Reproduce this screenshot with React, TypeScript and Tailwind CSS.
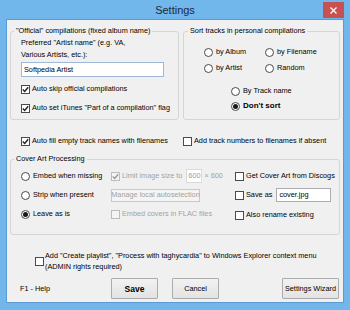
import React from "react";

const font = { fontFamily: '"Liberation Sans", Arial, sans-serif' };

const Check = ({ checked = false, disabled = false }: { checked?: boolean; disabled?: boolean }) => (
    <span className={`w-[9px] h-[9px] shrink-0 border flex items-center justify-center ${disabled ? "border-[#bcbcbc] bg-[#f4f4f4]" : "border-[#4a4a4a] bg-white"}`}>
        {checked && (
            <svg width="7" height="7" viewBox="0 0 7 7">
                <path d="M0.8 3.6 L2.7 5.5 L6.2 1.2" fill="none" stroke={disabled ? "#9a9a9a" : "#222"} strokeWidth="1.4" />
            </svg>
        )}
    </span>
);

const Radio = ({ checked = false }: { checked?: boolean }) => (
    <span className="w-[9px] h-[9px] shrink-0 rounded-full border border-[#4a4a4a] bg-white flex items-center justify-center">
        {checked && <span className="w-[5px] h-[5px] rounded-full bg-[#1a1a1a]" />}
    </span>
);

const CheckRow = ({ label, checked, disabled, className = "" }: { label: string; checked?: boolean; disabled?: boolean; className?: string }) => (
    <div className={`flex items-center gap-[2px] h-[12px] ${className}`}>
        <Check checked={checked} disabled={disabled} />
        <span className={`whitespace-nowrap ${disabled ? "text-[#a2a2a2]" : ""}`}>{label}</span>
    </div>
);

const RadioRow = ({ label, checked, bold, className = "" }: { label: string; checked?: boolean; bold?: boolean; className?: string }) => (
    <div className={`flex items-center gap-[3px] h-[12px] ${className}`}>
        <Radio checked={checked} />
        <span className={`whitespace-nowrap ${bold ? "font-bold text-[8px]" : ""}`}>{label}</span>
    </div>
);

const Button = ({ label, bold, className = "" }: { label: string; bold?: boolean; className?: string }) => (
    <div className={`h-[21px] flex items-center justify-center whitespace-nowrap border border-[#acacac] bg-gradient-to-b from-[#f2f2f2] to-[#e3e3e3] rounded-[1px] ${bold ? "font-bold text-[8.5px]" : ""} ${className}`}>
        {label}
    </div>
);

export default function App() {
    return (
        <div className="w-[350px] h-[310px] bg-[#72b7ec] flex flex-col text-[7.3px] leading-[12px] text-black" style={font}>
            <div className="h-[20px] relative flex items-center justify-center">
                <span className="text-[11px] text-[#1b2a38]">Settings</span>
                <div className="absolute right-[6px] top-[2px] w-[21px] h-[16px] bg-[#c75050] flex items-center justify-center">
                    <svg width="7" height="7" viewBox="0 0 7 7">
                        <path d="M0.5 0.5 L6.5 6.5 M6.5 0.5 L0.5 6.5" stroke="#fff" strokeWidth="1.3" />
                    </svg>
                </div>
            </div>
            <div className="mx-[7px] mb-[8px] flex-1 bg-[#f0f0f0] shadow-[0_0_0_1px_#5c9bd1] flex flex-col">
                <div className="flex gap-[4px] pl-[3px] pt-[6px]">
                    <fieldset className="w-[169px] h-[94px] border border-[#d5d5d5] rounded-[3px] pl-[10px]">
                        <legend className="ml-[-7px] px-[2px] leading-[10px]">"Official" compilations (fixed album name)</legend>
                        <div className="mt-[1px]">
                            Preferred "Artist name" (e.g. VA,
                            <br />
                            Various Artists, etc.):
                        </div>
                        <div className="mt-[1px] w-[143px] h-[15px] border border-[#9fb8d8] bg-white flex items-center px-[2px]">Softpedia Artist</div>
                        <CheckRow className="mt-[6px]" label="Auto skip official compilations" checked />
                        <CheckRow className="mt-[7px]" label={'Auto set iTunes "Part of a compilation" flag'} checked />
                    </fieldset>
                    <fieldset className="w-[157px] h-[94px] border border-[#d5d5d5] rounded-[3px] pl-[20px]">
                        <legend className="ml-[-16px] px-[2px] leading-[10px]">Sort tracks in personal compilations</legend>
                        <div className="grid grid-cols-[61px_auto] gap-y-[4px] mt-[10px]">
                            <RadioRow label="by Album" />
                            <RadioRow label="by Filename" />
                            <RadioRow label="by Artist" />
                            <RadioRow label="Random" />
                        </div>
                        <RadioRow className="mt-[11px] ml-[27px]" label="By Track name" />
                        <RadioRow className="mt-[3px] ml-[27px]" label="Don't sort" checked bold />
                    </fieldset>
                </div>
                <div className="flex mt-[15px] pl-[14px]">
                    <CheckRow className="w-[162px]" label="Auto fill empty track names with filenames" checked />
                    <CheckRow label="Add track numbers to filenames if absent" />
                </div>
                <fieldset className="ml-[3px] mt-[7px] w-[330px] h-[81px] border border-[#d5d5d5] rounded-[3px] pl-[10px]">
                    <legend className="ml-[-7px] px-[2px] leading-[10px]">Cover Art Processing</legend>
                    <div className="grid grid-cols-[90px_124px_auto] grid-rows-[14px_14px_14px] gap-y-[5px] mt-[5px] items-center">
                        <RadioRow label="Embed when missing" />
                        <div className="flex items-center">
                            <CheckRow label="Limit image size to" checked disabled />
                            <div className="ml-[4px] w-[16px] h-[14px] border border-[#dadada] bg-white text-[#9a9a9a] flex items-center justify-center">600</div>
                            <span className="ml-[2px] text-[#a2a2a2]">× 600</span>
                        </div>
                        <CheckRow label="Get Cover Art from Discogs" />
                        <RadioRow label="Strip when present" />
                        <div className="w-[89px] h-[13px] border border-[#c9c9c9] bg-[#f4f4f4] text-[#a2a2a2] flex items-center justify-center whitespace-nowrap">Manage local autoselection</div>
                        <div className="flex items-center">
                            <CheckRow label="Save as" />
                            <div className="ml-[4px] w-[55px] h-[14px] border border-[#abadb3] bg-white flex items-center px-[2px]">cover.jpg</div>
                        </div>
                        <RadioRow label="Leave as is" checked />
                        <CheckRow label="Embed covers in FLAC files" disabled />
                        <CheckRow className="mt-[2px]" label="Also rename existing" />
                    </div>
                </fieldset>
                <div className="flex items-center mt-[15px] pl-[28px] gap-[1px] leading-[11px]">
                    <Check />
                    <div>
                        Add "Create playlist", "Process with taghycardia" to Windows Explorer context menu
                        <br />
                        (ADMIN rights required)
                    </div>
                </div>
                <div className="flex items-center mt-[6px] pl-[13px] pr-[4px]">
                    <span className="w-[91px]">F1 - Help</span>
                    <Button className="w-[47px]" label="Save" bold />
                    <Button className="w-[47px] ml-[14px]" label="Cancel" />
                    <Button className="w-[57px] ml-auto" label="Settings Wizard" />
                </div>
            </div>
        </div>
    );
}
